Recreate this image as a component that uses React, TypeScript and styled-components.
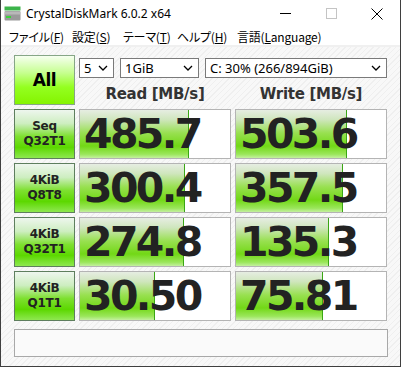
import React from 'react';
import styled, { createGlobalStyle } from 'styled-components';

const Global = createGlobalStyle`
  html, body { margin: 0; padding: 0; background: #ffffff; }
  body { width: 402px; height: 367px; overflow: hidden; }
`;

const Window = styled.div`
  width: 401px;
  height: 367px;
  box-sizing: border-box;
  border-left: 1px solid #3f3f3f;
  border-right: 1px solid #3f3f3f;
  border-bottom: 1px solid #3f3f3f;
  display: flex;
  flex-direction: column;
  background: #fff;
  font-family: 'Noto Sans', 'Noto Sans CJK JP', sans-serif;
`;

const TitleBar = styled.div`
  height: 27px;
  display: flex;
  align-items: center;
  padding-left: 3px;
`;

const TitleText = styled.span`
  font-size: 12px;
  color: #000;
  margin-left: 5px;
  flex: 1;
`;

const Controls = styled.div`
  display: flex;
  align-items: center;
  height: 100%;
`;

const CtlButton = styled.div`
  width: 46px;
  height: 100%;
  display: flex;
  align-items: center;
  justify-content: center;
`;

const MenuBar = styled.div`
  height: 18px;
  display: flex;
  align-items: center;
  padding-left: 8px;
  border-bottom: 2px solid #f0f0f0;
`;

const MenuItem = styled.span<{ $w: number }>`
  width: ${p => p.$w}px;
  font-family: 'Noto Sans CJK JP', sans-serif;
  font-feature-settings: 'palt';
  font-size: 12px;
  letter-spacing: -0.2px;
  color: #000;
  white-space: nowrap;
  u { text-decoration: underline; }
`;

const Content = styled.div`
  flex: 1;
  padding: 8px 12px 0 13px;
  background: repeating-linear-gradient(
    135deg,
    #f8f8f8 0px,
    #f8f8f8 3px,
    #efefef 3px,
    #efefef 4px
  );
`;

const Grid = styled.div`
  display: grid;
  grid-template-columns: 61px 152px 152px;
  grid-auto-rows: 50px;
  column-gap: 4px;
  row-gap: 4px;
`;

const AllButton = styled.div`
  box-sizing: border-box;
  border: 1px solid #86a686;
  background: linear-gradient(to bottom, #f6fff0 0%, #c6ff90 35%, #94ff20 65%, #84f400 100%);
  display: flex;
  align-items: center;
  justify-content: center;
  font-family: 'DejaVu Sans', sans-serif;
  font-weight: bold;
  font-size: 17px;
  letter-spacing: -0.5px;
  color: #000;
`;

const TopPanel = styled.div`
  grid-column: 2 / span 2;
  display: flex;
  flex-direction: column;
`;

const SelectRow = styled.div`
  display: flex;
  gap: 6px;
  margin-top: 3px;
  width: 308px;
`;

const Select = styled.div<{ $w: number }>`
  width: ${p => p.$w}px;
  height: 20px;
  box-sizing: border-box;
  border: 1px solid #7a7a7a;
  background: #fff;
  display: flex;
  align-items: center;
  justify-content: space-between;
  padding: 0 5px 0 4px;
  font-family: 'Noto Sans', sans-serif;
  font-size: 13px;
  color: #000;
`;

const HeaderRow = styled.div`
  display: grid;
  grid-template-columns: 152px 152px;
  column-gap: 4px;
  margin-top: 7px;
`;

const Header = styled.div`
  text-align: center;
  font-family: 'DejaVu Sans', sans-serif;
  font-weight: bold;
  font-size: 15px;
  letter-spacing: -0.3px;
  color: #333;
`;

const LabelButton = styled.div`
  box-sizing: border-box;
  border: 1px solid #5e7e5e;
  background: linear-gradient(to bottom, #eef6ee 0%, #cdeec0 28%, #7ee030 55%, #5cd800 78%, #8ee850 100%);
  display: flex;
  flex-direction: column;
  align-items: center;
  justify-content: center;
  font-family: 'DejaVu Sans', sans-serif;
  font-weight: bold;
  font-size: 12px;
  line-height: 15px;
  letter-spacing: -0.3px;
  color: #222;
`;

const Cell = styled.div`
  position: relative;
  box-sizing: border-box;
  border: 1px solid #b4b4b4;
  background: #fff;
  overflow: hidden;
  display: flex;
  align-items: center;
`;

const Bar = styled.div`
  position: absolute;
  left: 0;
  top: 0;
  bottom: 0;
  border-right: 1px solid #3aa614;
  background: linear-gradient(to bottom, #e6ede2 0%, #cfe6bd 20%, #98e050 48%, #72d816 75%, #9ae65a 92%, #c4f0a0 100%);
`;

const Value = styled.span`
  position: relative;
  margin-left: 4px;
  font-family: 'DejaVu Sans', sans-serif;
  font-weight: bold;
  font-size: 41px;
  letter-spacing: -2.6px;
  color: #222;
  line-height: 1;
`;

const Comment = styled.div`
  margin-top: 8px;
  width: 374px;
  height: 28px;
  box-sizing: border-box;
  border: 1px solid #a8a8a8;
  background: #fafafa;
`;

const Chevron = () => (
  <svg width="10" height="6" viewBox="0 0 10 6">
    <path d="M1 1 L5 5 L9 1" fill="none" stroke="#000" strokeWidth="1.3" />
  </svg>
);

const DriveIcon = () => (
  <svg width="17" height="15" viewBox="0 0 17 15">
    <rect x="0.5" y="0.5" width="16" height="4" fill="#3cb44a" />
    <rect x="0.5" y="5" width="16" height="9.5" rx="1" fill="#9a9a9a" />
    <rect x="1" y="5.5" width="15" height="3" fill="#b8b8b8" />
    <rect x="2" y="10" width="5" height="2" fill="#3cd23c" />
  </svg>
);

const menus = [
  { w: 63, text: 'ファイル(', key: 'F', rest: ')' },
  { w: 51, text: '設定(', key: 'S', rest: ')' },
  { w: 54, text: 'テーマ(', key: 'T', rest: ')' },
  { w: 60, text: 'ヘルプ(', key: 'H', rest: ')' },
  { w: 120, text: '言語(', key: 'L', rest: 'anguage)' },
];

const rows = [
  { l1: 'Seq', l2: 'Q32T1', read: '485.7', rw: 72, write: '503.6', ww: 73 },
  { l1: '4KiB', l2: 'Q8T8', read: '300.4', rw: 69, write: '357.5', ww: 70.5 },
  { l1: '4KiB', l2: 'Q32T1', read: '274.8', rw: 68.5, write: '135.3', ww: 61 },
  { l1: '4KiB', l2: 'Q1T1', read: '30.50', rw: 49, write: '75.81', ww: 57 },
];

const App = () => {
  return (
    <>
      <Global />
      <Window>
        <TitleBar>
          <DriveIcon />
          <TitleText>CrystalDiskMark 6.0.2 x64</TitleText>
          <Controls>
            <CtlButton>
              <svg width="11" height="2"><rect width="11" height="1" fill="#000" /></svg>
            </CtlButton>
            <CtlButton>
              <svg width="11" height="11"><rect x="0.5" y="0.5" width="10" height="10" fill="none" stroke="#c4c4c4" /></svg>
            </CtlButton>
            <CtlButton>
              <svg width="12" height="12"><path d="M0.5 0.5 L11.5 11.5 M11.5 0.5 L0.5 11.5" stroke="#000" strokeWidth="1" /></svg>
            </CtlButton>
          </Controls>
        </TitleBar>
        <MenuBar>
          {menus.map(m => (
            <MenuItem key={m.key} $w={m.w}>
              {m.text}<u>{m.key}</u>{m.rest}
            </MenuItem>
          ))}
        </MenuBar>
        <Content>
          <Grid>
            <AllButton>All</AllButton>
            <TopPanel>
              <SelectRow>
                <Select $w={35}>5<Chevron /></Select>
                <Select $w={79}>1GiB<Chevron /></Select>
                <Select $w={182}>C: 30% (266/894GiB)<Chevron /></Select>
              </SelectRow>
              <HeaderRow>
                <Header>Read [MB/s]</Header>
                <Header>Write [MB/s]</Header>
              </HeaderRow>
            </TopPanel>
            {rows.map((r, i) => (
              <React.Fragment key={i}>
                <LabelButton>
                  <span>{r.l1}</span>
                  <span>{r.l2}</span>
                </LabelButton>
                <Cell>
                  <Bar style={{ width: `${r.rw}%` }} />
                  <Value>{r.read}</Value>
                </Cell>
                <Cell>
                  <Bar style={{ width: `${r.ww}%` }} />
                  <Value>{r.write}</Value>
                </Cell>
              </React.Fragment>
            ))}
          </Grid>
          <Comment />
        </Content>
      </Window>
    </>
  );
};

export default App;
